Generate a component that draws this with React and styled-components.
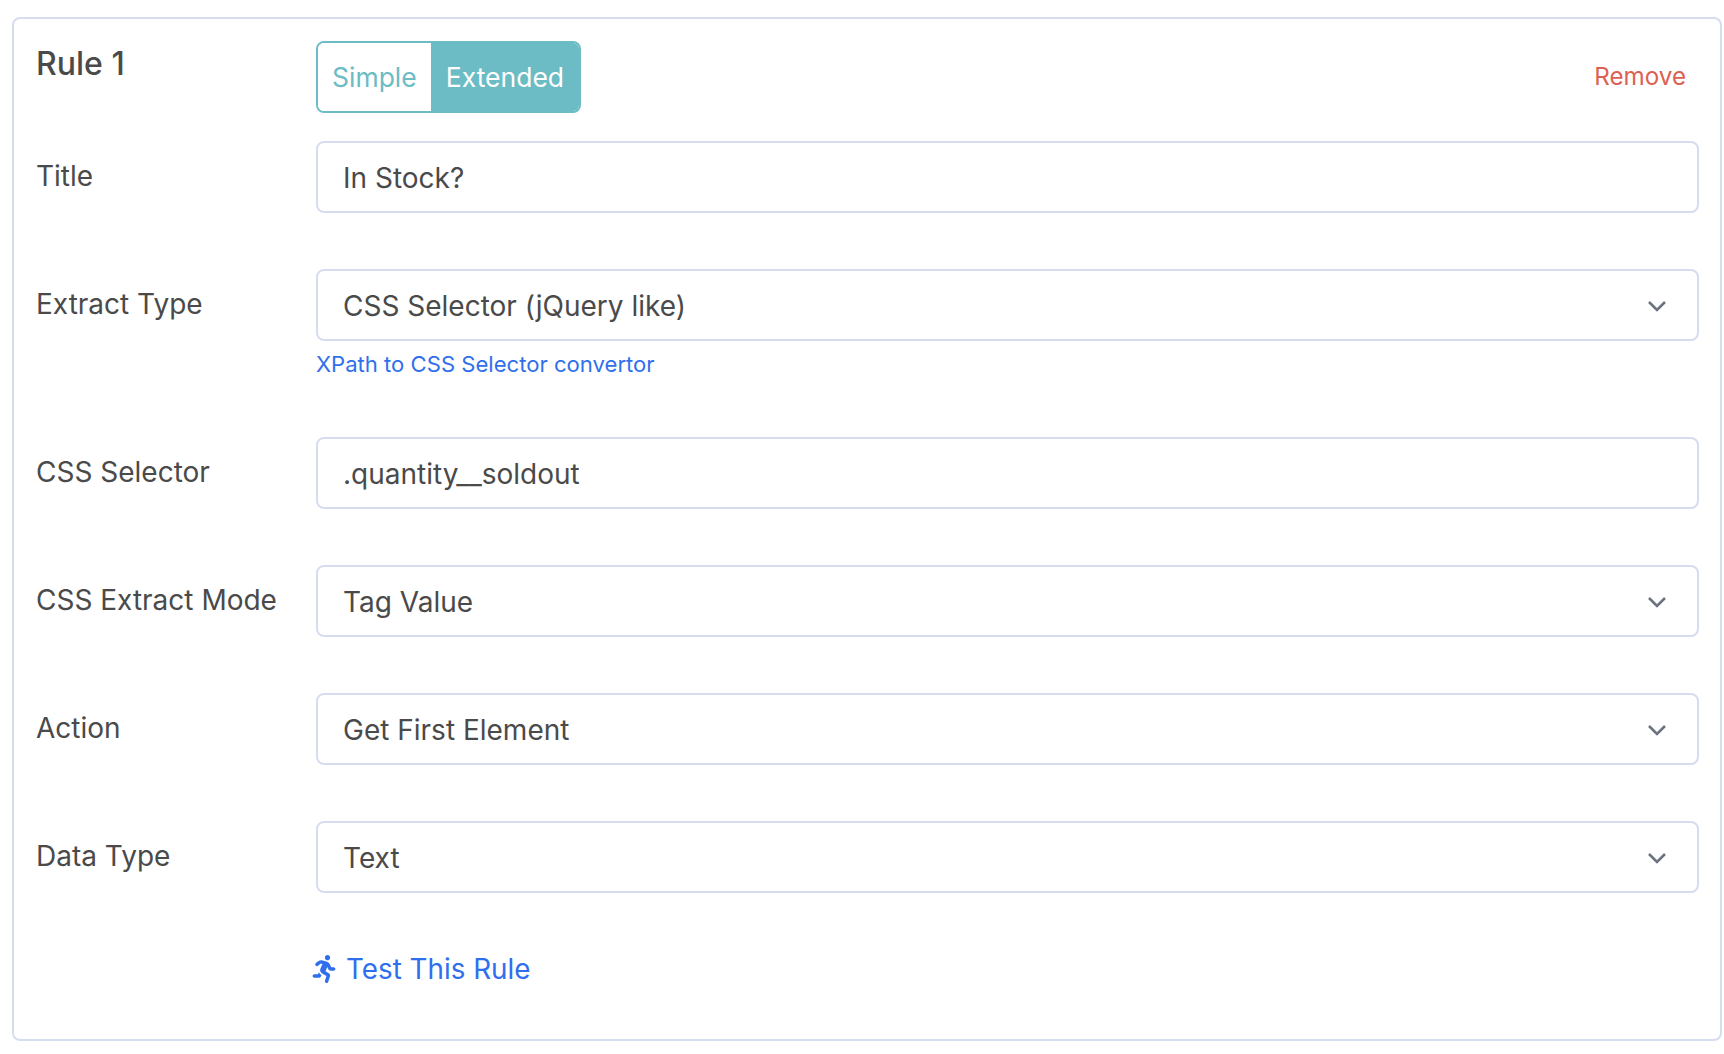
import styled, { createGlobalStyle } from "styled-components";
import { FaRunning } from "react-icons/fa";

const GlobalStyle = createGlobalStyle`
  html, body {
    margin: 0;
    background: #fff;
  }
  body {
    font-family: Inter, "Liberation Sans", sans-serif;
    color: #4a4a4a;
  }
`;

const Page = styled.div`
  padding: 17px 2px 0 12px;
`;

const Card = styled.div`
  box-sizing: border-box;
  height: 1024px;
  border: 2px solid #d5ddef;
  border-radius: 8px;
  padding: 22px 21px 0 22px;
`;

const Row = styled.div`
  display: flex;
  align-items: flex-start;
  margin-bottom: 56px;
`;

const Label = styled.div`
  flex: 0 0 280px;
  font-size: 28px;
  line-height: 38px;
  padding-top: 16px;
`;

const RuleTitle = styled(Label)`
  font-size: 32px;
  font-weight: 500;
  line-height: 44px;
  padding-top: 1px;
`;

const Field = styled.div`
  flex: 1;
  min-width: 0;
`;

const HeaderRow = styled(Row)`
  margin-bottom: 28px;
`;

const HeaderBody = styled.div`
  flex: 1;
  display: flex;
  align-items: center;
  justify-content: space-between;
`;

const Toggle = styled.div`
  display: flex;
  height: 72px;
  box-sizing: border-box;
  border: 2px solid #6bbcc4;
  border-radius: 8px;
  overflow: hidden;
`;

const ToggleOption = styled.div`
  display: flex;
  align-items: center;
  padding: 0 ${(p) => (p.$active ? 15 : 14)}px;
  font-size: 26.5px;
  color: ${(p) => (p.$active ? "#fff" : "#6bbcc4")};
  background: ${(p) => (p.$active ? "#6bbcc4" : "#fff")};
`;

const Remove = styled.div`
  font-size: 24.2px;
  color: #dd6152;
  margin-right: 13px;
  padding-bottom: 2px;
`;

const Box = styled.div`
  box-sizing: border-box;
  height: 72px;
  display: flex;
  align-items: center;
  justify-content: space-between;
  border: 2px solid #d5ddef;
  border-radius: 8px;
  padding: 2px 30px 0 25px;
  font-size: 28px;
  color: #4a4a4a;
  background: #fff;
`;

const Hint = styled.a`
  display: block;
  margin: 7px 0 1px;
  font-size: 22.1px;
  line-height: 32px;
  color: #2f6fed;
`;

const TestLink = styled.a`
  display: flex;
  align-items: center;
  gap: 8px;
  margin-left: 280px;
  font-size: 27.8px;
  line-height: 40px;
  color: #2f6fed;
  svg {
    margin-left: -6px;
  }
`;

const Chevron = () => (
  <svg width="20" height="12" viewBox="0 0 20 12" fill="none">
    <path d="M2 2l8 8 8-8" stroke="#6b7280" strokeWidth="2.6" />
  </svg>
);

const selects = [
  { label: "CSS Extract Mode", value: "Tag Value" },
  { label: "Action", value: "Get First Element" },
  { label: "Data Type", value: "Text" },
];

const App = () => (
  <Page>
    <GlobalStyle />
    <Card>
      <HeaderRow>
        <RuleTitle>Rule 1</RuleTitle>
        <HeaderBody>
          <Toggle>
            <ToggleOption>Simple</ToggleOption>
            <ToggleOption $active>Extended</ToggleOption>
          </Toggle>
          <Remove>Remove</Remove>
        </HeaderBody>
      </HeaderRow>

      <Row>
        <Label>Title</Label>
        <Field>
          <Box>In Stock?</Box>
        </Field>
      </Row>

      <Row>
        <Label>Extract Type</Label>
        <Field>
          <Box>
            CSS Selector (jQuery like)
            <Chevron />
          </Box>
          <Hint>XPath to CSS Selector convertor</Hint>
        </Field>
      </Row>

      <Row>
        <Label>CSS Selector</Label>
        <Field>
          <Box>.quantity__soldout</Box>
        </Field>
      </Row>

      {selects.map((s) => (
        <Row key={s.label}>
          <Label>{s.label}</Label>
          <Field>
            <Box>
              {s.value}
              <Chevron />
            </Box>
          </Field>
        </Row>
      ))}

      <TestLink>
        <FaRunning size={28} />
        Test This Rule
      </TestLink>
    </Card>
  </Page>
);

export default App;
